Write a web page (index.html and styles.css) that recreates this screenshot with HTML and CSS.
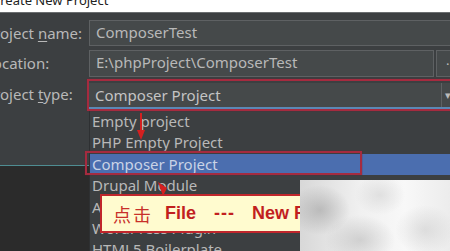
FILE: index.html
```html
<!DOCTYPE html>
<html>
<head>
<meta charset="utf-8">
<link rel="stylesheet" href="styles.css">
</head>
<body>
<div class="page">
  <div class="titlebar"><span class="title">Create New Project</span></div>
  <div class="dialog">
    <div class="form">
      <div class="label">Project <u>n</u>ame:</div>
      <div class="field">ComposerTest</div>
      <div class="label">Location:</div>
      <div class="locrow">
        <div class="field loc">E:\phpProject\ComposerTest</div>
        <div class="browse">.</div>
      </div>
      <div class="label">Project <u>t</u>ype:</div>
      <div class="combo">
        <span class="combo-text">Composer Project</span>
        <span class="combo-arrow">▾</span>
      </div>
    </div>
    <div class="gap"></div>
    <div class="lower"></div>
  </div>

  <ul class="dropdown">
    <li>Empty project</li>
    <li>PHP Empty Project</li>
    <li class="sel">Composer Project</li>
    <li>Drupal Module</li>
    <li>App Engine Project</li>
    <li>WordPress Plugin</li>
    <li>HTML5 Boilerplate</li>
  </ul>

  <div class="hl hl-combo"></div>
  <div class="hl hl-item"></div>

  <svg class="arrows" width="450" height="251" viewBox="0 0 450 251">
    <line x1="141" y1="113" x2="141" y2="132" stroke="#d42020" stroke-width="2"/>
    <polygon points="137,130 145,130 141,140" fill="#d42020"/>
    <polygon points="158,182 167,188 163,196" fill="#d42020"/>
  </svg>

  <div class="callout">
    <span class="cn">点击</span><b>File</b><b class="dash">---</b><b>New Project</b>
  </div>
  <div class="blur"></div>
</div>
</body>
</html>
```

FILE: styles.css
```css
* { box-sizing: border-box; }
html, body { margin: 0; padding: 0; }
body { width: 450px; height: 251px; overflow: hidden; background: #3c3f41; }
.page {
  position: relative;
  width: 450px;
  height: 251px;
  overflow: hidden;
  font-family: "Noto Sans", "Open Sans", sans-serif;
  color: #bbbbbb;
}
.titlebar {
  height: 12px;
  background: #ffffff;
  position: relative;
  overflow: hidden;
}
.title {
  display: block;
  margin-left: -8px;
  margin-top: -9px;
  font-family: "Noto Sans", sans-serif;
  font-size: 13px;
  color: #222;
  line-height: 18px;
}
.dialog {
  height: 239px;
  background: #3c3f41;
  border-top: 1px solid #6b6e70;
  display: flex;
  flex-direction: column;
}
.form {
  display: grid;
  grid-template-columns: 89px 1fr;
  grid-template-rows: 26px 27px 28px;
  row-gap: 4px;
  padding-top: 7px;
  align-items: stretch;
}
.label {
  margin-left: -15px;
  font-size: 15px;
  line-height: 26px;
  white-space: nowrap;
  color: #b8b8b8;
}
.label u { text-decoration-thickness: 1px; text-underline-offset: 2px; }
.field {
  background: #45494a;
  border: 1px solid #5e6163;
  border-right: none;
  font-size: 15px;
  line-height: 23px;
  padding-left: 6px;
  color: #b8b8b8;
  white-space: nowrap;
}
.locrow { display: flex; gap: 2px; }
.field.loc { flex: 1; border-right: 1px solid #5e6163; }
.browse {
  width: 14px;
  background: #45494a;
  border: 1px solid #5e6163;
  border-right: none;
  font-size: 13px;
  line-height: 18px;
  padding-left: 9px;
}
.combo {
  margin-top: 2px;
  height: 26px;
  background: #45494a;
  border-bottom: 2px solid #5b88b5;
  display: flex;
  align-items: center;
  justify-content: space-between;
}
.combo-text { font-size: 15px; padding-left: 6px; color: #c4c4c4; }
.combo-arrow {
  width: 9px;
  height: 24px;
  border-left: 1px solid #5e6163;
  font-size: 11px;
  line-height: 24px;
  padding-left: 3px;
  color: #bbbbbb;
}
.gap { height: 56px; }
.lower {
  flex: 1;
  background: #2b2b2b;
  border-top: 1px solid #4f8d92;
}
.dropdown {
  position: absolute;
  left: 89px;
  top: 111px;
  width: 361px;
  height: 150px;
  margin: 0;
  padding: 0;
  list-style: none;
  background: #3c3f41;
  border-left: 1px solid #2e3032;
}
.dropdown li {
  height: 21.4px;
  line-height: 21px;
  font-size: 15px;
  padding-left: 2px;
  color: #b8b8b8;
  white-space: nowrap;
}
.dropdown li.sel { background: #4b6eaf; color: #c9d3e6; }
.hl {
  position: absolute;
  border: 2px solid #a52b3f;
  box-shadow: 0 0 1px #6a2030;
}
.hl-combo { left: 87px; top: 79px; width: 370px; height: 32px; }
.hl-item { left: 85px; top: 151px; width: 277px; height: 24px; }
.arrows { position: absolute; left: 0; top: 0; }
.callout {
  position: absolute;
  left: 100px;
  top: 194px;
  width: 240px;
  height: 39px;
  background: #fffbcf;
  border: 2px solid #c0262c;
  display: flex;
  align-items: center;
  gap: 12px;
  padding-left: 11px;
  color: #c21f1f;
  font-family: "Liberation Sans", "Noto Sans CJK SC", sans-serif;
  font-size: 18px;
  white-space: nowrap;
}
.callout .cn { font-family: "Noto Sans CJK SC", sans-serif; font-weight: 400; font-size: 18px; letter-spacing: 2px; color: #c8302a; }
.callout b { font-weight: 700; }
.callout .dash { margin: 0 5px 0 6px; letter-spacing: 1px; }
.blur {
  position: absolute;
  left: 300px;
  top: 180px;
  width: 150px;
  height: 71px;
  background:
    radial-gradient(ellipse 30px 25px at 20px 30px, rgba(150,150,150,0.5), transparent),
    radial-gradient(ellipse 25px 20px at 80px 15px, rgba(200,200,200,0.45), transparent),
    radial-gradient(ellipse 35px 25px at 60px 60px, rgba(160,160,160,0.4), transparent),
    radial-gradient(ellipse 30px 25px at 125px 50px, rgba(180,180,180,0.35), transparent),
    linear-gradient(90deg, #d8d8d8, #f0f0f0 40%, #f8f8f8 70%, #ececec);
}
```
